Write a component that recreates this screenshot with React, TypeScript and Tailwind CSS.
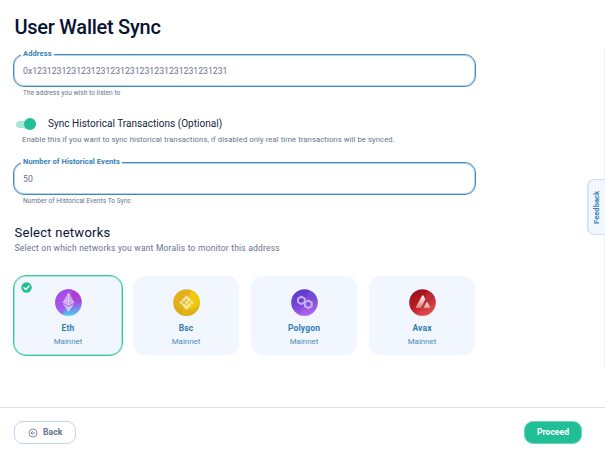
import React from "react";

function Field({ label, value, help, labelClass, helpClass, valueClass }: { label: string; value: string; help: string; labelClass: string; helpClass: string; valueClass: string }) {
  return (
    <div className="ml-[13px] w-[463px]">
      <div className="relative flex h-[33px] items-center rounded-[11px] border border-[#3f8bbd] pl-[9px] shadow-[inset_0_0_0_1px_#b5d3e6]">
        <span className={`absolute -top-[7px] left-[7px] bg-white px-[2px] text-[7.5px] leading-[12px] font-bold whitespace-nowrap text-[#3581b5] ${labelClass}`}>{label}</span>
        <span className={`pt-[2px] text-[8.7px] whitespace-nowrap text-[#68738d] ${valueClass}`}>{value}</span>
      </div>
      <div className={`ml-[10px] h-[13px] text-[6.6px] leading-[13px] whitespace-nowrap text-[#68738d] ${helpClass}`}>{help}</div>
    </div>
  );
}

function EthIcon() {
  return (
    <svg width="27" height="27" viewBox="0 0 27 27">
      <defs>
        <linearGradient id="eth" x1="0.65" y1="0" x2="0.75" y2="1">
          <stop offset="0" stopColor="#b52fc8" />
          <stop offset="0.5" stopColor="#a04fe0" />
          <stop offset="1" stopColor="#48d5f5" />
        </linearGradient>
        <linearGradient id="ethSide" x1="0" y1="0" x2="0.5" y2="1">
          <stop offset="0" stopColor="#9a50e6" />
          <stop offset="1" stopColor="#b35bf0" />
        </linearGradient>
        <clipPath id="ethClip"><circle cx="13.5" cy="13.5" r="13.3" /></clipPath>
      </defs>
      <g clipPath="url(#ethClip)">
        <rect width="27" height="27" fill="url(#eth)" />
        <path d="M0 0H19L7 27H0Z" fill="url(#ethSide)" opacity="0.8" />
      </g>
      <path d="M13.5 4L19 13.5L13.5 16.5L8 13.5Z" fill="#fff" opacity="0.45" />
      <path d="M8 14.8L13.5 18L19 14.8L13.5 23Z" fill="#fff" opacity="0.6" />
      <path d="M13.5 4L19 13.5L13.5 16.5L8 13.5ZM13.5 4V16.5M8 13.5L13.5 11L19 13.5" fill="none" stroke="#fff" strokeWidth="0.5" opacity="0.7" />
    </svg>
  );
}

function BscIcon() {
  return (
    <svg width="27" height="27" viewBox="0 0 27 27">
      <defs><clipPath id="bscClip"><circle cx="13.5" cy="13.5" r="13.3" /></clipPath></defs>
      <g clipPath="url(#bscClip)">
        <rect width="27" height="27" fill="#e2b11c" />
        <path d="M19 0H27V22L7 27Z" fill="#efc80f" />
        <path d="M0 18Q14 24 27 16V27H0Z" fill="#d7a51e" opacity="0.6" />
      </g>
      <g fill="#fff" opacity="0.62">
        <path d="M13.5 6.3L18.2 11L16.3 12.9L13.5 10.1L10.7 12.9L8.8 11Z" />
        <path d="M13.5 20.7L18.2 16L16.3 14.1L13.5 16.9L10.7 14.1L8.8 16Z" />
        <path d="M13.5 11.5L15.5 13.5L13.5 15.5L11.5 13.5Z" />
        <path d="M8.2 11.6L10.1 13.5L8.2 15.4L6.3 13.5Z" />
        <path d="M18.8 11.6L20.7 13.5L18.8 15.4L16.9 13.5Z" />
      </g>
    </svg>
  );
}

function PolygonIcon() {
  return (
    <svg width="27" height="27" viewBox="0 0 27 27">
      <defs>
        <linearGradient id="poly" x1="0.3" y1="0" x2="0.6" y2="1">
          <stop offset="0" stopColor="#5b38c6" />
          <stop offset="0.55" stopColor="#7746d6" />
          <stop offset="1" stopColor="#b65cf0" />
        </linearGradient>
        <clipPath id="polyClip"><circle cx="13.5" cy="13.5" r="13.3" /></clipPath>
      </defs>
      <g clipPath="url(#polyClip)">
        <rect width="27" height="27" fill="url(#poly)" />
        <path d="M19 0H27V27H8Z" fill="#fff" opacity="0.06" />
      </g>
      <g fill="none" stroke="#dac8f7" strokeWidth="2" strokeLinejoin="round" opacity="0.8">
        <path d="M10.4 7.7L13.8 9.6V13.2L10.4 15.1L7 13.2V9.6Z" />
        <path d="M17.3 11.6L20.7 13.5V17.1L17.3 19L13.9 17.1V13.5Z" />
      </g>
    </svg>
  );
}

function AvaxIcon() {
  return (
    <svg width="27" height="27" viewBox="0 0 27 27">
      <defs>
        <linearGradient id="avax" x1="0.2" y1="0" x2="0.7" y2="1">
          <stop offset="0" stopColor="#980f18" />
          <stop offset="0.5" stopColor="#b91d26" />
          <stop offset="1" stopColor="#e34242" />
        </linearGradient>
        <linearGradient id="peak" x1="0" y1="0" x2="0" y2="1">
          <stop offset="0" stopColor="#fff" />
          <stop offset="1" stopColor="#fff" stopOpacity="0.4" />
        </linearGradient>
        <clipPath id="avaxClip"><circle cx="13.5" cy="13.5" r="13.3" /></clipPath>
      </defs>
      <g clipPath="url(#avaxClip)">
        <rect width="27" height="27" fill="url(#avax)" />
        <path d="M19 0H27V27H8Z" fill="#fff" opacity="0.07" />
      </g>
      <path d="M13.1 6.7Q13.8 5.8 14.5 6.7L16 9.5Q16.4 10.3 16 11.1L12 18.2Q11.5 19 10.6 19H7.5Q6.4 19 7 17.8Z" fill="url(#peak)" />
      <path d="M17.4 13.8Q18 12.9 18.6 13.8L21.1 18Q21.6 19 20.6 19H15.4Q14.4 19 15 18Z" fill="url(#peak)" />
    </svg>
  );
}

const networks = [
  { name: "Eth", icon: <EthIcon />, selected: true },
  { name: "Bsc", icon: <BscIcon />, selected: false },
  { name: "Polygon", icon: <PolygonIcon />, selected: false },
  { name: "Avax", icon: <AvaxIcon />, selected: false },
];

export default function App() {
  return (
    <div className="relative flex h-[450px] w-[605px] flex-col overflow-hidden bg-white font-['Roboto',sans-serif]">
      <main className="flex h-[407px] flex-col">
        <h1 className="mt-[14px] ml-[14.5px] h-[40px] text-[20px] leading-[27px] font-medium tracking-[-0.26px] whitespace-nowrap text-[#071331]">User Wallet Sync</h1>
        <Field label="Address" value="0x1231231231231231231231231231231231231231" help="The address you wish to listen to" labelClass="tracking-[0.1px]" valueClass="tracking-[0px]" helpClass="tracking-[0.04px]" />
        <div className="mt-[17px] ml-[16px] flex h-[14px] items-center">
          <div className="flex h-[7px] w-[20px] items-center justify-end rounded-full bg-[#a6e6d5]">
            <div className="h-[12px] w-[12px] shrink-0 rounded-full bg-[#21bf96]" />
          </div>
          <span className="ml-[12px] text-[10px] leading-[14px] tracking-[0.03px] whitespace-nowrap text-[#15253c]">Sync Historical Transactions (Optional)</span>
        </div>
        <p className="ml-[22px] h-[31px] text-[7.7px] leading-[17px] tracking-[0.08px] whitespace-nowrap text-[#68738d]">Enable this if you want to sync historical transactions, if disabled only real time transactions will be synced.</p>
        <Field label="Number of Historical Events" value="50" help="Number of Historical Events To Sync" labelClass="tracking-[0.09px]" valueClass="tracking-[0px]" helpClass="tracking-[0.04px]" />
        <h2 className="mt-[16px] ml-[14.5px] h-[17px] text-[13px] leading-[17px] tracking-[0.26px] whitespace-nowrap text-[#071331]">Select networks</h2>
        <p className="ml-[14.5px] h-[34px] text-[8.5px] leading-[15px] tracking-[0.2px] whitespace-nowrap text-[#68738d]">Select on which networks you want Moralis to monitor this address</p>
        <div className="ml-[13px] flex gap-[8px]">
          {networks.map((n) => (
            <div key={n.name} className={`relative flex h-[81px] w-[110px] flex-col items-center rounded-[13px] border pt-[13px] ${n.selected ? "border-[#35c7a0] bg-[#f2f6ff] shadow-[inset_0_0_0_1px_#a9e6d6]" : "border-x-[2px] border-transparent bg-[#f2f6ff] bg-clip-padding"}`}>
              {n.selected && (
                <svg className="absolute top-[6px] left-[7px]" width="11" height="11" viewBox="0 0 11 11">
                  <circle cx="5.5" cy="5.5" r="5.2" fill="#21bf96" />
                  <path d="M3 5.7L4.8 7.4L8.1 4" fill="none" stroke="#fff" strokeWidth="1.4" strokeLinecap="round" strokeLinejoin="round" />
                </svg>
              )}
              {n.icon}
              <div className="mt-[5px] text-[8.5px] leading-[14px] font-bold tracking-[0.15px] text-[#2e7daf]">{n.name}</div>
              <div className="text-[7.9px] leading-[14px] tracking-[0px] text-[#4b8db9]">Mainnet</div>
            </div>
          ))}
        </div>
      </main>
      <footer className="flex h-[43px] items-start justify-between border-t border-[#d5e8f1] pt-[13px] pr-[23px] pl-[14px]">
        <button className="flex h-[23px] w-[62px] items-center rounded-[9px] border border-[#c0d7e8] pl-[13px] text-[#68738d]">
          <svg width="10" height="10" viewBox="0 0 10 10" fill="none" stroke="currentColor" strokeWidth="0.8">
            <circle cx="5" cy="5" r="4" />
            <path d="M7.2 5H3M4.8 3.2L3 5L4.8 6.8" />
          </svg>
          <span className="ml-[5px] text-[8.7px] font-bold">Back</span>
        </button>
        <button className="flex h-[23px] w-[58px] items-center justify-center rounded-[9px] border border-[#6dd5ba] bg-[#21bf96] text-[8.6px] font-bold text-white">Proceed</button>
      </footer>
      <div className="absolute top-[48px] right-0 h-[320px] w-px bg-[#f2f2f2]" />
      <div className="absolute top-[179px] left-[587px] flex h-[56px] w-[18px] items-center justify-center rounded-l-[7px] border border-r-0 border-[#c9e0ef] bg-[#f2f6ff] shadow-[inset_1px_0_0_0_#deebf7]">
        <span className="rotate-180 text-[7.6px] leading-[12px] font-bold text-[#3581b5] [writing-mode:vertical-rl]">Feedback</span>
      </div>
    </div>
  );
}
